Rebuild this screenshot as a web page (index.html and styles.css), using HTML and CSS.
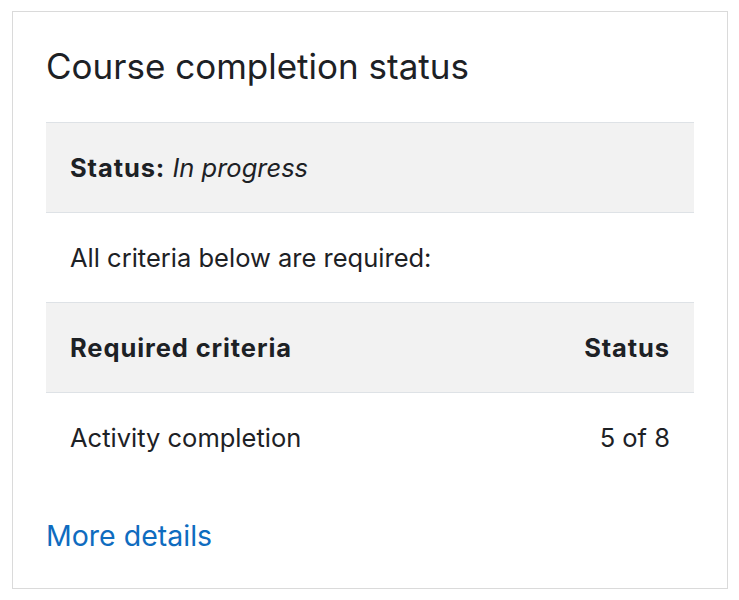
FILE: index.html
```html
<!DOCTYPE html>
<html lang="en">
<head>
  <meta charset="UTF-8" />
  <meta name="viewport" content="width=device-width, initial-scale=1.0"/>
  <title>Course completion status</title>
  <link rel="stylesheet" href="styles.css">
</head>
<body>
  <section class="block">
    <h5 class="block-title">Course completion status</h5>

    <table class="completion">
      <tr class="shaded">
        <td colspan="2"><strong>Status:</strong> <em>In progress</em></td>
      </tr>
      <tr>
        <td colspan="2">All criteria below are required:</td>
      </tr>
      <tr class="shaded">
        <th>Required criteria</th>
        <th class="right">Status</th>
      </tr>
      <tr class="last">
        <td>Activity completion</td>
        <td class="right">5 of 8</td>
      </tr>
    </table>

    <a href="#" class="more">More details</a>
  </section>
</body>
</html>
```

FILE: styles.css
```css
body {
  font-family: Inter, "Liberation Sans", Arial, sans-serif;
  margin: 0;
  padding: 11px 11px 11px 12px;
  background-color: #fff;
  color: #1d2125;
}

.block {
  border: 1px solid #dadada;
  padding: 32px 33px 35px;
  height: 578px;
  box-sizing: border-box;
}

.block-title {
  font-size: 35px;
  font-weight: 400;
  line-height: 40px;
  margin: 2px 0 36px;
}

.completion {
  width: 100%;
  border-collapse: collapse;
  font-size: 25.5px;
  line-height: 36px;
}

.completion td,
.completion th {
  border-top: 1px solid #dee2e6;
  padding: 27px 24px 26px;
  text-align: left;
}

.completion th,
.completion strong {
  font-weight: 700;
  letter-spacing: 0.9px;
}

.completion .right {
  text-align: right;
}

.completion .shaded {
  background-color: #f2f2f2;
}

.more {
  display: inline-block;
  margin-top: 36px;
  font-size: 28.5px;
  line-height: 36px;
  color: #0f6cbf;
  text-decoration: none;
}
```
